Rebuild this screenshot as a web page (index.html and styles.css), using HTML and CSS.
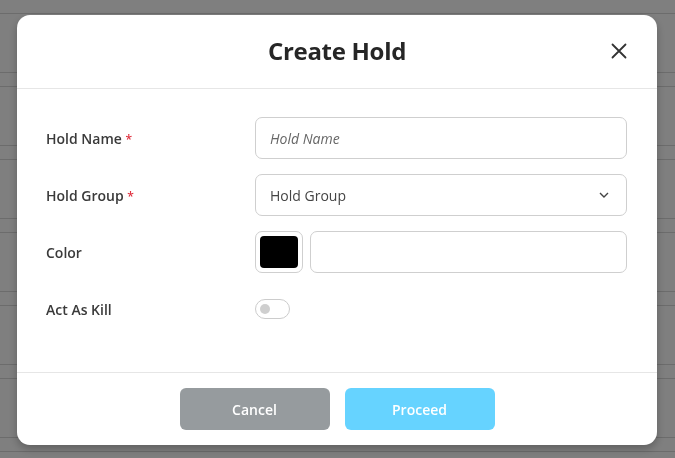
FILE: index.html
```html
<!DOCTYPE html>
<html lang="en">

<head>
    <meta charset="UTF-8">
    <meta name="viewport" content="width=device-width, initial-scale=1.0">
    <title>Create Hold</title>
    <link rel="stylesheet" href="styles.css">
</head>

<body>
    <div class="table">
        <div class="row"></div>
        <div class="row"></div>
        <div class="row"></div>
        <div class="row"></div>
        <div class="row"></div>
        <div class="row"></div>
        <div class="row"></div>
    </div>

    <div class="overlay">
        <div class="modal">
            <div class="modal_header">
                <h2 class="modal_title">Create Hold</h2>
                <button class="close" aria-label="Close">
                    <svg width="16" height="16" viewBox="0 0 16 16">
                        <path d="M1.5 1.5 L14.5 14.5 M14.5 1.5 L1.5 14.5" stroke="#333" stroke-width="1.8" stroke-linecap="round" fill="none" />
                    </svg>
                </button>
            </div>

            <div class="modal_body">
                <label class="label">Hold Name <span class="req">*</span></label>
                <input class="input" type="text" placeholder="Hold Name">

                <label class="label">Hold Group <span class="req">*</span></label>
                <div class="select">
                    <span>Hold Group</span>
                    <svg width="10" height="6" viewBox="0 0 10 6">
                        <path d="M1 1 L5 5 L9 1" stroke="#444" stroke-width="1.4" fill="none" />
                    </svg>
                </div>

                <label class="label">Color</label>
                <div class="color_row">
                    <div class="swatch"><div class="swatch_fill"></div></div>
                    <input class="input" type="text">
                </div>

                <label class="label">Act As Kill</label>
                <div class="toggle_wrap">
                    <div class="toggle"><div class="knob"></div></div>
                </div>
            </div>

            <div class="modal_footer">
                <button class="btn cancel">Cancel</button>
                <button class="btn proceed">Proceed</button>
            </div>
        </div>
    </div>
</body>

</html>
```

FILE: styles.css
```css
body {
    margin: 0;
    width: 675px;
    height: 458px;
    overflow: hidden;
    background: #fff;
    font-family: "Open Sans", "Liberation Sans", sans-serif;
}

.table {
    height: 458px;
    box-sizing: border-box;
    padding-top: 13px;
    overflow: hidden;
}

.row {
    height: 58px;
    border-top: 1px solid #d8d8d8;
    border-bottom: 1px solid #d8d8d8;
    margin-bottom: 13px;
}

.overlay {
    position: fixed;
    inset: 0;
    background: rgba(0, 0, 0, 0.5);
    display: flex;
    align-items: flex-start;
    padding: 15px 0 0 17px;
}

.modal {
    width: 640px;
    height: 430px;
    background: #fff;
    border-radius: 13px;
    box-shadow: 0 4px 8px rgba(0, 0, 0, 0.25);
    display: flex;
    flex-direction: column;
}

.modal_header {
    height: 73px;
    border-bottom: 1px solid #e6e6e6;
    display: flex;
    align-items: center;
    justify-content: center;
    position: relative;
}

.modal_title {
    margin: 0 0 2px;
    font-size: 24px;
    font-weight: 700;
    color: #262626;
    letter-spacing: -0.3px;
}

.close {
    position: absolute;
    right: 30px;
    top: 28px;
    border: none;
    background: none;
    padding: 0;
    width: 16px;
    height: 16px;
    display: flex;
}

.modal_body {
    flex: 1;
    padding: 28px 30px 0 29px;
    display: grid;
    grid-template-columns: 209px 1fr;
    grid-auto-rows: 42px;
    row-gap: 15px;
    align-items: center;
}

.label {
    font-size: 14px;
    font-weight: 600;
    color: #3a3a3a;
}

.req {
    color: #e0313f;
    font-size: 12px;
}

.input {
    box-sizing: border-box;
    width: 100%;
    height: 42px;
    border: 1px solid #cfcfcf;
    border-radius: 7px;
    padding: 0 14px;
    font-family: inherit;
    font-size: 14px;
    color: #444;
    outline: none;
}

.input::placeholder {
    font-style: italic;
    color: #666;
}

.select {
    box-sizing: border-box;
    height: 42px;
    border: 1px solid #cfcfcf;
    border-radius: 7px;
    padding: 0 17px 0 14px;
    display: flex;
    align-items: center;
    justify-content: space-between;
    font-size: 14px;
    color: #444;
}

.color_row {
    display: flex;
    gap: 7px;
}

.swatch {
    box-sizing: border-box;
    width: 48px;
    height: 42px;
    flex: none;
    border: 1px solid #cfcfcf;
    border-radius: 7px;
    padding: 4px;
}

.swatch_fill {
    height: 100%;
    background: #000;
    border-radius: 4px;
}

.toggle_wrap {
    display: flex;
}

.toggle {
    box-sizing: border-box;
    width: 35px;
    height: 20px;
    border: 1px solid #cccccc;
    border-radius: 10px;
    display: flex;
    align-items: center;
    padding-left: 4px;
}

.knob {
    width: 10px;
    height: 10px;
    border-radius: 50%;
    background: #cfcfcf;
}

.modal_footer {
    height: 72px;
    border-top: 1px solid #e6e6e6;
    display: flex;
    justify-content: center;
    align-items: center;
    gap: 15px;
}

.btn {
    width: 150px;
    height: 42px;
    border: none;
    border-radius: 6px;
    font-family: inherit;
    font-size: 14px;
    font-weight: 600;
    color: #fff;
}

.cancel {
    background: #969b9e;
}

.proceed {
    background: #66d3ff;
}
```
